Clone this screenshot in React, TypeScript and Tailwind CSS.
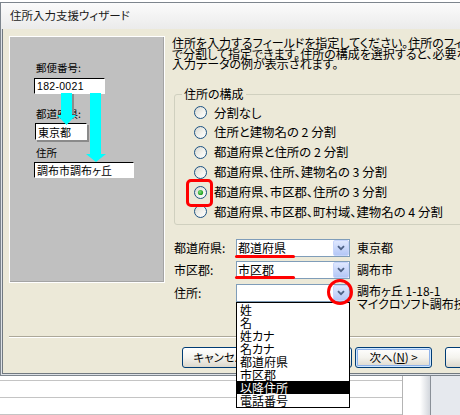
import React from "react";

function Radio({ checked }: { checked?: boolean }) {
  return (
    <svg width="13" height="13" viewBox="0 0 13 13" className="shrink-0">
      <defs>
        <linearGradient id="rgrad" x1="0" y1="0" x2="1" y2="1">
          <stop offset="0" stopColor="#d6d6ce" />
          <stop offset="0.6" stopColor="#f4f4f0" />
          <stop offset="1" stopColor="#ffffff" />
        </linearGradient>
        <radialGradient id="rdot" cx="0.4" cy="0.4" r="0.6">
          <stop offset="0" stopColor="#7ee07e" />
          <stop offset="1" stopColor="#1c9a1c" />
        </radialGradient>
      </defs>
      <circle cx="6.5" cy="6.5" r="6" fill="url(#rgrad)" stroke="#1c5180" strokeWidth="1" />
      {checked && <circle cx="6.5" cy="6.5" r="2.6" fill="url(#rdot)" />}
    </svg>
  );
}

function ComboButton() {
  return (
    <div className="w-[16px] h-[16px] shrink-0 rounded-[2px] border border-[#c7d5fb] bg-gradient-to-b from-[#dfe8fe] to-[#b4c7f6] flex items-center justify-center">
      <svg width="8" height="6" viewBox="0 0 8 6">
        <path d="M1 1.2 L4 4.2 L7 1.2" fill="none" stroke="#4d6185" strokeWidth="1.8" />
      </svg>
    </div>
  );
}

function Combo({ text }: { text: string }) {
  return (
    <div className="w-[114px] h-[18px] shrink-0 border border-[#7f9db9] bg-white flex items-center">
      <div className="flex-1 pl-[1px] text-[12px] leading-[16px] whitespace-nowrap">{text}</div>
      <ComboButton />
    </div>
  );
}

function XPButton({ children, w, ml, focus }: { children: React.ReactNode; w: string; ml?: string; focus?: boolean }) {
  return (
    <div
      className={`${w} ${ml ?? ""} h-[21px] shrink-0 rounded-[3px] border border-[#003c74] bg-gradient-to-b from-[#ffffff] via-[#f4f3ee] to-[#dcd8cc] flex items-center justify-center text-[11.5px] leading-none whitespace-nowrap ${
        focus ? "shadow-[inset_0_0_0_1px_#cee7ff,inset_0_0_0_2px_#8fb2ea]" : ""
      }`}
    >
      {children}
    </div>
  );
}

const radios = [
  "分割なし",
  "住所と建物名の 2 分割",
  "都道府県と住所の 2 分割",
  "都道府県、住所、建物名の 3 分割",
  "都道府県、市区郡、住所の 3 分割",
  "都道府県、市区郡、町村域、建物名の 4 分割",
];

const listItems = ["姓", "名", "姓カナ", "名カナ", "都道府県", "市区郡", "以降住所", "電話番号"];

export default function App() {
  return (
    <div className="relative w-[460px] h-[415px] overflow-hidden bg-white text-black font-['Noto_Sans_CJK_JP','Noto_Sans',sans-serif] [font-feature-settings:'palt']">
      <div className="h-[2px]" />
      {/* window */}
      <div className="w-[520px] border-t border-l border-b border-[#7d858d]">
        <div className="h-[26px] bg-gradient-to-b from-[#fbfbfb] to-[#ebebeb] flex items-center pl-[9px] text-[11.5px] leading-none text-[#1a1a1a]">
          住所入力支援ウィザード
        </div>
        <div className="border-l border-b border-[#dde1e6]">
          <div className="border-l border-b border-[#717980]">
            <div className="h-[344px] bg-[#ece9d8] flex flex-col">
              {/* top section */}
              <div className="h-[307px] flex pl-[6px] pt-[7px]">
                {/* left preview panel */}
                <div className="relative w-[156px] h-[247px] shrink-0 border border-white">
                  <div className="w-full h-full bg-[#c0c0c0] border-b border-r border-[#a4a4a4] flex flex-col text-[10.5px] leading-[12px]">
                    <div className="ml-[26px] mt-[25px]">郵便番号:</div>
                    <div className="ml-[24px] mt-[4px] w-[71px] h-[16px] bg-white border border-t-black border-l-black border-r-white border-b-white flex items-center pl-[2px] font-['Liberation_Sans',sans-serif] text-[10.5px] tracking-[0.3px]">
                      182-0021
                    </div>
                    <div className="ml-[26px] mt-[14px]">都道府県:</div>
                    <div className="ml-[25px] mt-[3px] w-[52px] h-[17px] bg-white border border-t-black border-l-black border-r-white border-b-white shadow-[2px_2px_0_#8a8a8a] flex items-center pl-[2px] text-[11px]">
                      東京都
                    </div>
                    <div className="ml-[26px] mt-[7px]">住所</div>
                    <div className="ml-[24px] mt-[3px] w-[100px] h-[16px] bg-white border border-t-black border-l-black border-r-white border-b-white flex items-center pl-[2px] text-[11px]">
                      調布市調布ヶ丘
                    </div>
                  </div>
                  <svg className="absolute left-[-1px] top-[-1px]" width="156" height="247" viewBox="0 0 156 247">
                    <rect x="63" y="58" width="2" height="20" fill="#8c8c8c" />
                    <polygon points="52,57 63,57 63,79 67,79 57.5,89 48,79 52,79" fill="#00ffff" />
                    <polygon points="81,57 92,57 92,118 97,118 87,126 77,118 81,118" fill="#00ffff" />
                  </svg>
                </div>

                {/* right column */}
                <div className="ml-[7px] w-[330px] shrink-0 flex flex-col">
                  <div className="mt-[2px] text-[12px] leading-[10.5px] whitespace-nowrap">
                    <div>住所を入力するフィールドを指定してください。住所のフィールドは最大</div>
                    <div>で分割して指定できます。住所の構成を選択すると、必要なフィールド</div>
                    <div>入力データの例が表示されます。</div>
                  </div>

                  <fieldset className="mt-[17.5px] ml-[2px] w-[300px] border border-[#d0d0bf] rounded-[3px] pt-[2px] pb-[2px]">
                    <legend className="ml-[7px] px-[2px] text-[12px] leading-[14px]">住所の構成</legend>
                    {radios.map((r, i) => (
                      <div key={r} className="h-[19.8px] flex items-center pl-[19px] gap-[7px]">
                        <Radio checked={i === 4} />
                        <span className="text-[12.4px] leading-none whitespace-nowrap">{r}</span>
                      </div>
                    ))}
                  </fieldset>

                  <div className="mt-[14px] ml-[2px] flex flex-col gap-[4.5px] text-[12px]">
                    <div className="flex items-center h-[18px]">
                      <div className="w-[62px] shrink-0 leading-[18px]">都道府県:</div>
                      <Combo text="都道府県" />
                      <div className="ml-[7px] leading-[18px] whitespace-nowrap">東京都</div>
                    </div>
                    <div className="flex items-center h-[18px]">
                      <div className="w-[62px] shrink-0 leading-[18px]">市区郡:</div>
                      <Combo text="市区郡" />
                      <div className="ml-[7px] leading-[18px] whitespace-nowrap">調布市</div>
                    </div>
                    <div className="flex items-start h-[18px]">
                      <div className="w-[62px] shrink-0 leading-[18px]">住所:</div>
                      <Combo text="" />
                      <div className="ml-[7px] pt-[0.5px] leading-[13px] whitespace-nowrap">
                        <div>調布ヶ丘 1-18-1</div>
                        <div>マイクロソフト調布技術センター</div>
                      </div>
                    </div>
                  </div>
                </div>
              </div>

              {/* separator */}
              <div className="ml-[6px] h-px bg-[#aca899]" />
              <div className="ml-[6px] h-px bg-white" />

              {/* buttons */}
              <div className="mt-[9px] flex pl-[179px]">
                <XPButton w="w-[75px]">キャンセル</XPButton>
                <XPButton w="w-[76px]" ml="ml-[19px]">&lt; 戻る(B)</XPButton>
                <XPButton w="w-[77px]" ml="ml-[3px]" focus>
                  <span>
                    次へ(<span className="underline">N</span>) &gt;
                  </span>
                </XPButton>
                <XPButton w="w-[75px]" ml="ml-[13px]">完了</XPButton>
              </div>
            </div>
          </div>
        </div>
      </div>

      {/* sheet behind */}
      <div className="flex h-[39px]">
        <div className="w-[402px] shrink-0 flex flex-col">
          <div className="h-[5px] border-b border-[#c4c4c4]" />
          <div className="h-[17px] border-b border-[#c4c4c4]" />
          <div className="h-[17px] border-b border-[#c4c4c4]" />
        </div>
        <div className="w-[18px] shrink-0 border-l border-[#b4b4b4] bg-white" />
        <div className="w-[10px] shrink-0 bg-gradient-to-r from-white to-[#d2d6dc]" />
        <div className="flex-1 border-l border-[#8a9098] bg-[#e6e9ee]" />
      </div>

      {/* dropdown list popup */}
      <div className="absolute left-[236px] top-[302px] w-[114px] h-[106px] border border-black bg-white text-[12px] leading-[13px]">
        {listItems.map((t) => (
          <div key={t} className={`h-[13px] pl-[3px] whitespace-nowrap ${t === "以降住所" ? "bg-black text-white" : ""}`}>
            {t}
          </div>
        ))}
      </div>

      {/* red markers */}
      <div className="absolute left-[186px] top-[179px] w-[27px] h-[28px] border-[3px] border-[#ff0000] rounded-[5px]" />
      <div className="absolute left-[235px] top-[254.5px] w-[60px] h-[3.5px] rounded-full bg-[#ff0000]" />
      <div className="absolute left-[235px] top-[275.5px] w-[60px] h-[3.5px] rounded-full bg-[#ff0000]" />
      <div className="absolute left-[327px] top-[279px] w-[26px] h-[26px] border-[3px] border-[#ff0000] rounded-full" />
    </div>
  );
}
